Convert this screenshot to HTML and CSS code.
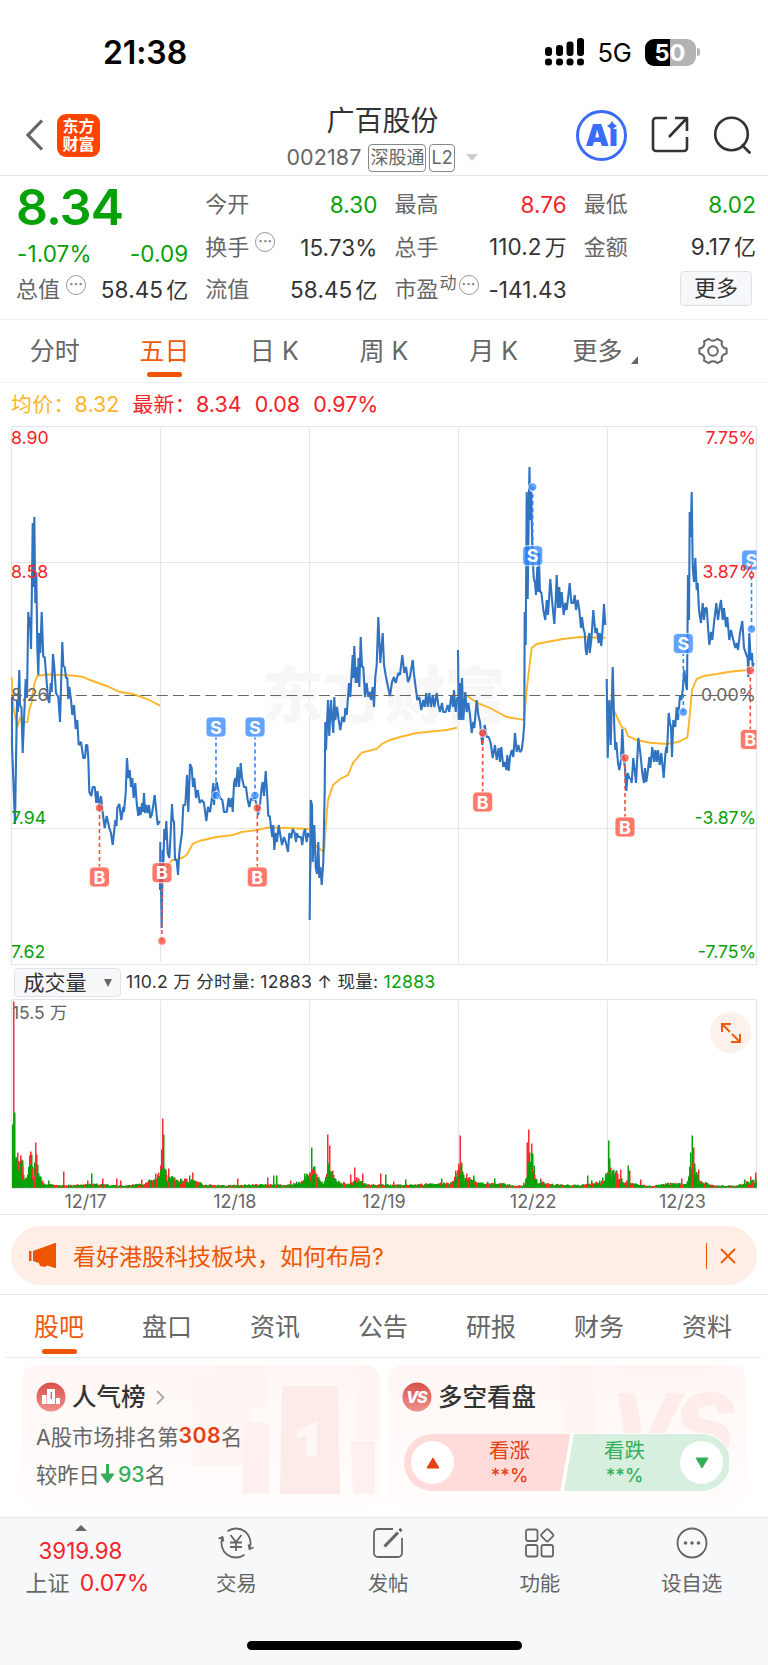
FILE: index.html
```html
<!DOCTYPE html>
<html lang="zh-CN">
<head>
    <meta charset="UTF-8">
    <meta name="viewport" content="width=device-width, initial-scale=1.0">
    <title>广百股份 002187</title>
    <link rel="stylesheet" href="styles.css">
</head>
<body>

    <div class="status">
        <span class="time">21:38</span>
        <div class="status-right">
            <svg class="signal" width="40" height="28" viewBox="0 0 40 28">
                <rect x="0" y="9" width="7" height="9" rx="3"/>
                <rect x="11" y="7" width="7" height="11" rx="3"/>
                <rect x="21.500" y="3.500" width="7" height="14.500" rx="3"/>
                <rect x="32" y="0" width="7" height="18" rx="3"/>
                <rect x="0" y="20.500" width="7" height="7" rx="3"/>
                <rect x="11" y="20.500" width="7" height="7" rx="3"/>
                <rect x="21.500" y="20.500" width="7" height="7" rx="3"/>
                <rect x="32" y="20.500" width="7" height="7" rx="3"/>
            </svg>
            <span class="network">5G</span>
            <span class="battery">50</span>
            <span class="battery-tip"></span>
        </div>
    </div>

    <header>
        <div class="header-left">
            <svg width="20" height="32" viewBox="0 0 20 32" fill="none" stroke="#666" stroke-width="3.200"><path d="M17 1.500 3 16l14 14.500"/></svg>
            <div class="logo"><span>东方</span><span>财富</span></div>
        </div>
        <div class="header-title">
            <h1>广百股份</h1>
            <div class="code">
                <span class="code-number">002187</span>
                <span class="tag">深股通</span>
                <span class="tag">L2</span>
                <i class="caret"></i>
            </div>
        </div>
        <div class="header-right">
            <div class="ai">A<span>ı</span>
                <svg class="spark" width="10" height="10" viewBox="0 0 10 10"><path d="M5 0 7 3 10 5 7 7 5 10 3 7 0 5 3 3z" fill="#3a6cf8"/></svg>
            </div>
            <svg width="38" height="38" viewBox="0 0 38 38" fill="none" stroke="#333" stroke-width="2.600" stroke-linejoin="round"><path d="M16 2H5a3 3 0 0 0-3 3v27a3 3 0 0 0 3 3h28a3 3 0 0 0 3-3V21M18 21 36 2M24 2h12v13"/></svg>
            <svg width="40" height="38" viewBox="0 0 40 38" fill="none" stroke="#333" stroke-width="2.600" stroke-linecap="round"><circle cx="18.500" cy="18" r="16.300"/><path d="m29.500 29.500 7 7"/></svg>
        </div>
    </header>

    <section class="quote">
        <div class="quote-main down">
            <b>8.34</b>
            <div class="row"><span>-1.07%</span><span>-0.09</span></div>
        </div>
        <div class="row"><label>今开</label><span class="down">8.30</span></div>
        <div class="row"><label>最高</label><span class="up">8.76</span></div>
        <div class="row"><label>最低</label><span class="down">8.02</span></div>
        <div class="row"><label>换手<i class="more-dot">···</i></label><span>15.73%</span></div>
        <div class="row"><label>总手</label><span>110.2<em>万</em></span></div>
        <div class="row"><label>金额</label><span>9.17<em>亿</em></span></div>
        <div class="row"><label>总值<i class="more-dot">···</i></label><span>58.45<em>亿</em></span></div>
        <div class="row"><label>流值</label><span>58.45<em>亿</em></span></div>
        <div class="row"><label>市盈<sup>动</sup><i class="more-dot tight">···</i></label><span>-141.43</span></div>
        <div class="row end"><button class="more">更多</button></div>
    </section>

    <nav class="periods">
        <a>分时</a>
        <a class="active">五日</a>
        <a>日 K</a>
        <a>周 K</a>
        <a>月 K</a>
        <a class="period-more">更多<i></i></a>
        <a class="settings">
            <svg width="30" height="28" viewBox="0 0 30 28" fill="none" stroke="#666" stroke-width="2"><path d="M10.700 1.800c1.800 2.600 6.800 2.600 8.600 0l4.700 2.600c-1.400 3.400.8 6.700 4.600 7.200v4.800c-3.800.5-6 3.800-4.600 7.200l-4.700 2.600c-1.800-2.600-6.800-2.600-8.600 0L6 23.600c1.400-3.400-.8-6.700-4.600-7.200v-4.800C5.200 11.100 7.400 7.800 6 4.400z" stroke-linejoin="round"/><circle cx="15" cy="14" r="4.800"/></svg>
        </a>
    </nav>

    <div class="legend">
        <span class="avg"><em>均价：</em>8.32</span>
        <span class="up"><em>最新：</em>8.34</span>
        <span class="up">0.08</span>
        <span class="up">0.97%</span>
    </div>

    <svg class="price-chart" width="768" height="540" viewBox="0 426 768 540">
        <defs>
            <clipPath id="plot"><rect x="11" y="426" width="745.500" height="540"/></clipPath>
        </defs>
        <g class="grid">
            <path d="M11.500 426.500H756.500M11.500 562.500H756.500M11.500 828.500H756.500M11.500 964.500H756.500M11.500 426V965M756.500 426V965M160.500 428V962M309.500 428V962M458.500 428V962M607.500 428V962"/>
        </g>
        <text class="watermark" x="262" y="718">东方财富</text>
        <g id="average" class="average"></g>
        <g id="price" class="price"></g>
        <path class="zero" d="M11 695.500H756"/>
        <g id="markers" clip-path="url(#plot)"></g>
        <g class="axis">
            <text class="up" x="11" y="444.200">8.90</text>
            <text class="up" x="11" y="578">8.58</text>
            <text x="11" y="701">8.26</text>
            <text class="down" x="11" y="823.500">7.94</text>
            <text class="down" x="11" y="957.500">7.62</text>
        </g>
        <g class="axis right">
            <text class="up" x="756" y="444.200">7.75%</text>
            <text class="up" x="756" y="578">3.87%</text>
            <text x="756" y="701">0.00%</text>
            <text class="down" x="756" y="823.500">-3.87%</text>
            <text class="down" x="756" y="957.500">-7.75%</text>
        </g>
    </svg>

    <div class="volume-head">
        <button>成交量<i></i></button>
        <span>110.2 万 分时量: 12883 ↑ 现量: <b>12883</b></span>
    </div>

    <div class="volume">
        <svg width="768" height="190" viewBox="0 999 768 190">
            <g class="grid">
                <path d="M11.500 999.500H756.500V1188.500H11.500zM160.500 1001V1187M309.500 1001V1187M458.500 1001V1187M607.500 1001V1187"/>
            </g>
            <g id="volume"></g>
            <text class="volume-max" x="12" y="1019">15.5 万</text>
        </svg>
        <div class="expand">
            <svg width="22" height="22" viewBox="0 0 22 22" fill="none" stroke="#f05a0c" stroke-width="2"><path d="M2 10V2h9M2 2l8 8M20 12v8h-9M20 20l-8-8"/></svg>
        </div>
    </div>

    <div class="dates">
        <span>12/17</span><span>12/18</span><span>12/19</span><span>12/22</span><span>12/23</span>
    </div>

    <div class="banner-wrap">
        <div class="banner">
            <svg width="28" height="26" viewBox="0 0 28 26" fill="#ee5500"><path d="M0 8h2.500v10H0zM4 8 26 0h1v25h-1l-8-2.500-2 1.500-5-1-1-3-6-2z"/></svg>
            <span>看好港股科技板块，如何布局?</span>
            <i></i>
            <svg width="16" height="16" viewBox="0 0 16 16" fill="none" stroke="#ee5500" stroke-width="1.800"><path d="m1 1 14 14M15 1 1 15"/></svg>
        </div>
    </div>

    <nav class="sections">
        <a class="active">股吧</a>
        <a>盘口</a>
        <a>资讯</a>
        <a>公告</a>
        <a>研报</a>
        <a>财务</a>
        <a>资料</a>
    </nav>

    <div class="cards">
        <div class="card rank">
            <svg class="card-bg" width="190" height="143" viewBox="0 0 190 143">
                <path fill="#fff5f3" d="M3 6h22V0h54l-3 43H60v58H3zM165 0h25v75h-25z"/>
                <path fill="#fef0ee" d="M55 58h24v71H52zM161 76h24v53h-22z"/>
                <path fill="#fdebe9" d="M92 21h56l2 108H90z"/>
                <path fill="#fff7f6" d="M107 65l20-9v35h-11V71l-9 3z"/>
            </svg>
            <div class="card-title">
                <svg width="30" height="30" viewBox="0 0 30 30">
                    <circle cx="15" cy="15" r="14.500" fill="url(#badge)"/>
                    <defs><linearGradient id="badge" x2="0" y2="1"><stop stop-color="#d9504c"/><stop offset="1" stop-color="#ef928c"/></linearGradient></defs>
                    <path fill="#fff" d="M6 13h4.500v9H6zM11 7h8v15h-8zM20 16h4v6h-4z"/>
                    <path stroke="#df6560" stroke-width="1.500" d="M15.300 10v7"/>
                </svg>
                <h2>人气榜</h2>
                <svg width="9" height="15" viewBox="0 0 9 15" fill="none" stroke="#aaa" stroke-width="1.800"><path d="m1 1 6.500 6.500L1 14"/></svg>
            </div>
            <p>A股市场排名第<b>308</b>名</p>
            <p>较昨日<svg class="fall" width="15" height="20" viewBox="0 0 15 20"><path d="M7.500 1v11" stroke="#34ae5c" stroke-width="3" stroke-linecap="round"/><path d="M1 10h13l-6.500 9z" fill="#34ae5c" stroke="#34ae5c" stroke-linejoin="round"/></svg><em>93</em>名</p>
        </div>
        <div class="card versus">
            <svg class="card-bg" width="190" height="143" viewBox="0 0 190 143">
                <path fill="#fff5f3" d="M0 0h35l7 70H10zM60 0h105l-30 15H68z"/>
                <text x="52" y="96" class="card-vs">VS</text>
            </svg>
            <div class="card-title">
                <svg width="30" height="30" viewBox="0 0 30 30">
                    <circle cx="15" cy="15" r="14.500" fill="url(#badge)"/>
                    <text x="14" y="21" class="icon-vs">VS</text>
                </svg>
                <h2>多空看盘</h2>
            </div>
            <div class="vote">
                <div class="vote-up">
                    <i><svg width="14" height="12" viewBox="0 0 14 12"><path d="M7 1 13 11H1z" fill="#e5400f" stroke="#e5400f" stroke-linejoin="round"/></svg></i>
                    <span>看涨<b>**%</b></span>
                </div>
                <div class="vote-down">
                    <span>看跌<b>**%</b></span>
                    <i><svg width="14" height="12" viewBox="0 0 14 12"><path d="M7 11 13 1H1z" fill="#34ae5c" stroke="#34ae5c" stroke-linejoin="round"/></svg></i>
                </div>
            </div>
        </div>
    </div>

    <footer>
        <div class="index">
            <i></i>
            <span class="up">3919.98</span>
            <div>上证 <span class="up">0.07%</span></div>
        </div>
        <a>
            <svg width="36" height="32" viewBox="0 0 36 32" fill="none" stroke="#666" stroke-width="1.800"><path d="M9.500 4.300A14.500 14.500 0 0 1 31.500 21.500M26.500 27.700A14.500 14.500 0 0 1 4.500 10.500M.5 11.500l4-1.500 1 4.500M35.500 20.500l-4 1.500-1-4.500M12.500 8l5.500 7 5.500-7M12 15.500h12M12 20h12M18 15v9"/></svg>
            交易
        </a>
        <a>
            <svg width="32" height="32" viewBox="0 0 32 32" fill="none" stroke="#666" stroke-width="1.800"><path d="M21 2H6a4 4 0 0 0-4 4v20a4 4 0 0 0 4 4h20a4 4 0 0 0 4-4V11"/><path stroke-width="3.200" d="M12.500 19.500 26 5.500M27.500 4l2-2"/></svg>
            发帖
        </a>
        <a>
            <svg width="32" height="32" viewBox="0 0 32 32" fill="none" stroke="#666" stroke-width="1.800"><rect x="2" y="2.500" width="11.500" height="11.500" rx="2"/><rect x="2" y="18" width="11.500" height="11.500" rx="2"/><rect x="17.500" y="18" width="11.500" height="11.500" rx="2"/><rect x="18.500" y="3.500" width="9.500" height="9.500" rx="1.500" transform="rotate(45 23.250 8.250)"/></svg>
            功能
        </a>
        <a>
            <svg width="32" height="32" viewBox="0 0 32 32" fill="none" stroke="#666" stroke-width="1.800"><circle cx="16" cy="16" r="14.500"/><g fill="#666" stroke="none"><circle cx="9.500" cy="16" r="1.800"/><circle cx="16" cy="16" r="1.800"/><circle cx="22.500" cy="16" r="1.800"/></g></svg>
            设自选
        </a>
        <div class="home"></div>
    </footer>

    <script src="chart.js"></script>
</body>
</html>
```
FILE: styles.css
```css
* {
    margin: 0;
    padding: 0;
    box-sizing: border-box;
}

body {
    width: 768px;
    height: 1665px;
    background-color: #fff;
    color: #333;
    font-family: Inter, "Noto Sans CJK SC", sans-serif;
    font-size: 22px;
    overflow: hidden;
}

i, em {
    font-style: normal;
}

svg {
    display: block;
    flex-shrink: 0;
}

button {
    font: inherit;
    color: #333;
    background-color: #f7f8fa;
    border: 1.5px solid #dfe2e8;
    border-radius: 4px;
}

.up {
    color: #f6222a;
    fill: #f6222a;
}

.down {
    color: #06a106;
    fill: #06a106;
}

/* status bar */
.status {
    height: 95px;
    padding: 9px 68px 0 103px;
    display: flex;
    align-items: center;
    justify-content: space-between;
    color: #000;
}

.time {
    font-size: 32px;
    font-weight: 600;
    letter-spacing: -0.1px;
}

.status-right {
    display: flex;
    align-items: center;
}

.network {
    margin: 0 13px 0 13px;
    font-size: 25.5px;
    letter-spacing: -0.3px;
}

.battery {
    width: 51px;
    height: 27px;
    border-radius: 9px;
    background: linear-gradient(90deg, #000 50%, #b3b3b3 50%);
    color: #fff;
    font-size: 23.5px;
    font-weight: 700;
    line-height: 27px;
    text-align: center;
}

.battery-tip {
    width: 3px;
    height: 8px;
    margin-left: 1.5px;
    border-radius: 0 3px 3px 0;
    background-color: #b3b3b3;
}

/* header */
header {
    height: 81px;
    padding: 0 15px 0 25px;
    display: grid;
    grid-template-columns: 240px 1fr 240px;
    border-bottom: 1.5px solid #e6e6e6;
}

.header-left {
    display: flex;
    align-items: center;
    gap: 12px;
}

.logo {
    width: 43px;
    height: 43px;
    border-radius: 9px;
    background-color: #ff4400;
    color: #fff;
    font-size: 16px;
    font-weight: 700;
    line-height: 18px;
    display: flex;
    flex-direction: column;
    align-items: center;
    justify-content: center;
}

.header-title {
    display: flex;
    flex-direction: column;
    align-items: center;
}

h1 {
    height: 48px;
    font-size: 28px;
    font-weight: 400;
    line-height: 52px;
    margin-right: 13px;
}

.code {
    display: flex;
    align-items: center;
    margin-right: 14px;
    color: #666;
    font-size: 21.5px;
    line-height: 29px;
}

.code-number {
    margin-right: 7px;
    letter-spacing: 0.1px;
}

.tag {
    height: 28px;
    margin-right: 3px;
    padding: 0 1px;
    border: 1.3px solid #888;
    border-radius: 4px;
    font-size: 18px;
    line-height: 25px;
}

.caret {
    margin-left: 8px;
    border: 6.5px solid transparent;
    border-top: 7px solid #ccc;
    border-bottom: 0;
}

.header-right {
    display: flex;
    align-items: center;
    justify-content: flex-end;
    gap: 24px;
}

.ai {
    position: relative;
    width: 51px;
    height: 51px;
    border: 3px solid #3a6cf8;
    border-radius: 50%;
    color: #3a6cf8;
    font-size: 30px;
    font-weight: 900;
    line-height: 45px;
    text-align: center;
}

.spark {
    position: absolute;
    top: 8px;
    right: 7px;
}

/* quote */
.quote {
    height: 144px;
    padding: 7px 12px 0 17px;
    display: grid;
    grid-template-columns: repeat(4, 171.25px);
    grid-auto-rows: 42.7px;
    column-gap: 18px;
    border-bottom: 1.5px solid #eee;
}

.quote-main {
    grid-row: span 2;
}

.quote-main b {
    display: block;
    height: 49px;
    margin-left: -1px;
    font-size: 50px;
    font-weight: 600;
    line-height: 49px;
    letter-spacing: -0.9px;
}

.row {
    height: 43px;
    display: flex;
    align-items: center;
    justify-content: space-between;
    white-space: nowrap;
    line-height: 43px;
}

.row > span {
    font-size: 22.5px;
    letter-spacing: 0.1px;
}

.quote-main .row {
    height: 43px;
}

.end {
    grid-column: 4;
    justify-content: flex-end;
}

.row label {
    color: #666;
    display: flex;
    align-items: center;
    margin-left: -1px;
}

.row em {
    margin-left: 3px;
    font-size: 22px;
}

.more-dot {
    width: 20px;
    height: 20px;
    margin: -10px 0 0 6px;
    border: 1.5px solid #999;
    border-radius: 50%;
    color: #888;
    font-size: 14px;
    font-weight: 700;
    line-height: 16px;
    text-align: center;
}

.more-dot.tight {
    margin-left: 2px;
}

sup {
    margin: -14px 0 0 1px;
    font-size: 17px;
    line-height: 20px;
}

.more {
    width: 72px;
    height: 35px;
    margin: -2px 4px 0 0;
    line-height: 29px;
}

/* tabs */
.periods, .sections {
    display: grid;
    grid-template-columns: repeat(7, 1fr);
    color: #666;
    font-size: 25px;
}

.periods {
    height: 63px;
    border-bottom: 1.5px solid #f0f0f0;
}

.periods a, .sections a {
    height: 61px;
    padding-bottom: 4px;
    display: flex;
    align-items: center;
    justify-content: center;
    position: relative;
}

.periods .settings {
    padding-bottom: 0;
}

.active {
    color: #f05a0c;
}

.active::after {
    content: "";
    position: absolute;
    left: calc(50% - 17.5px);
    bottom: 4px;
    width: 35px;
    height: 5.5px;
    border-radius: 3px;
    background-color: #ee5500;
}

.period-more {
    padding-left: 4px;
}

.period-more i {
    margin: 22px 0 0 9px;
    border-left: 7px solid transparent;
    border-bottom: 8px solid #666;
}

.legend {
    height: 43px;
    padding-left: 11px;
    display: flex;
    align-items: center;
    gap: 13px;
    font-size: 21.5px;
    line-height: 43px;
}

.legend em {
    font-size: 20.8px;
    letter-spacing: 0.4px;
}

.avg {
    color: #fdb52b;
}

/* charts */
.grid path {
    fill: none;
    stroke: #e2e5ed;
    stroke-width: 1.2;
}

.watermark {
    font-size: 61px;
    font-weight: 900;
    fill: #f7f7f7;
}

.price polyline {
    fill: none;
    stroke: #2f73c1;
    stroke-width: 2.1;
    stroke-linejoin: bevel;
}

.average polyline {
    fill: none;
    stroke: #fdb52b;
    stroke-width: 1.9;
}

.zero {
    stroke: #666;
    stroke-width: 1.2;
    stroke-dasharray: 11 5.2;
}

.axis text {
    font-size: 17.7px;
}

.axis text:not([class]) {
    fill: #666;
}

.right {
    text-anchor: end;
}

.marker line {
    stroke-width: 1.6;
    stroke-dasharray: 4 3;
}

.marker text {
    fill: #fff;
    font-size: 18px;
    font-weight: 700;
    text-anchor: middle;
}

.marker.sell {
    fill: #2f86ff;
    stroke: #2f86ff;
}

.marker.buy {
    fill: #ff4d3d;
    stroke: #ff4d3d;
}

.marker rect, .marker circle {
    stroke: #fff;
    stroke-width: 0.8;
    fill-opacity: 0.76;
}

.marker text {
    stroke: none;
}

.volume-head {
    height: 33px;
    padding-left: 14px;
    display: flex;
    align-items: center;
    font-size: 17.6px;
    letter-spacing: 0.25px;
    line-height: 30px;
}

.volume-head > span {
    margin-top: -2px;
}

.volume-head button {
    width: 107px;
    height: 29px;
    margin: 0 5px 0 0;
    display: flex;
    align-items: center;
    justify-content: center;
    gap: 17px;
    font-size: 21px;
    line-height: 24px;
}

.volume-head i {
    border: 4.5px solid transparent;
    border-top: 8px solid #666;
    border-bottom: 0;
}

.volume-head b {
    font-weight: 400;
    color: #06a106;
}

.volume {
    position: relative;
    height: 190px;
}

.volume-max {
    font-size: 17.5px;
    fill: #666;
}

.expand {
    position: absolute;
    top: 13px;
    right: 17px;
    width: 41px;
    height: 41px;
    border-radius: 50%;
    background-color: #fdf1eb;
    display: flex;
    align-items: center;
    justify-content: center;
}

.dates {
    height: 26px;
    padding: 0 11px;
    display: grid;
    grid-template-columns: repeat(5, 1fr);
    color: #666;
    font-size: 18px;
    line-height: 26px;
    text-align: center;
    border-bottom: 1.5px solid #e6e8ec;
}

/* banner */
.banner-wrap {
    height: 80px;
    padding: 11px 11px 0;
    border-bottom: 1.5px solid #e6e8ec;
}

.banner {
    height: 59px;
    padding: 0 21px 0 18px;
    border-radius: 30px;
    background-color: #feeee6;
    color: #ee5500;
    font-size: 23px;
    display: flex;
    align-items: center;
}

.banner span {
    margin: -2px 0 0 16px;
    flex: 1;
}

.banner i {
    width: 1.5px;
    height: 26px;
    margin-right: 13px;
    background-color: #ee5500;
}

.sections {
    height: 63px;
    margin: 0 7px 0 5px;
    border-bottom: 1.5px solid #ebebeb;
}

.sections a {
    height: 63px;
}

/* cards */
.cards {
    height: 159px;
    padding: 7px 22px 0;
    display: grid;
    grid-template-columns: 1fr 1fr;
    gap: 8px;
}

.card {
    position: relative;
    height: 143px;
    padding: 13px 14px 0;
    border-radius: 14px;
    background: linear-gradient(#fff7f5, #fffdfc);
    overflow: hidden;
}

.card-bg {
    position: absolute;
    top: 0;
    right: 0;
}

.card-vs {
    font-size: 94px;
    font-weight: 800;
    font-style: italic;
    letter-spacing: -8px;
    fill: #fdecea;
}

.icon-vs {
    font-size: 16px;
    font-weight: 800;
    font-style: italic;
    letter-spacing: -1.5px;
    text-anchor: middle;
    fill: #fff;
}

.card-title {
    position: relative;
    height: 38px;
    display: flex;
    align-items: center;
    gap: 6px;
}

h2 {
    font-size: 24.5px;
    font-weight: 500;
    line-height: 38px;
    margin-right: 4px;
}

.card p {
    position: relative;
    display: flex;
    align-items: center;
    height: 38.5px;
    color: #666;
    font-size: 21.3px;
}

.card p b {
    color: #e5400f;
    font-weight: 600;
    letter-spacing: 0.4px;
}

.card p em {
    color: #34ae5c;
    font-weight: 500;
    margin-left: 3px;
}

.vote {
    position: relative;
    width: 328px;
    height: 59px;
    margin: 17px 0 0 1px;
    display: flex;
    border: 1.5px solid #fff;
    border-radius: 30px;
    background-color: #fff;
    overflow: hidden;
}

.vote > div {
    display: flex;
    align-items: center;
    justify-content: space-between;
}

.vote-up {
    width: 168px;
    padding: 0 42px 0 7px;
    background-color: #ffdcd9;
    color: #e5400f;
    clip-path: polygon(0 0, 99% 0, 93% 100%, 0 100%);
}

.vote-down {
    width: 165px;
    margin-left: -8px;
    padding: 0 6px 0 40px;
    background-color: #d7efde;
    color: #34ae5c;
    clip-path: polygon(6% 0, 100% 0, 100% 100%, 0 100%);
}

.vote i {
    width: 43px;
    height: 43px;
    border-radius: 50%;
    background-color: #fff;
    display: flex;
    align-items: center;
    justify-content: center;
}

.vote span {
    font-size: 20.5px;
    line-height: 25px;
    text-align: center;
}

.vote b {
    display: block;
    font-size: 18.5px;
    font-weight: 500;
    line-height: 25px;
}

/* bottom bar */
footer {
    height: 149px;
    display: grid;
    grid-template-columns: 161px repeat(4, 1fr);
    grid-template-rows: 122px 1fr;
    background-color: #f7f8fa;
    border-top: 1.5px solid #e4e6ea;
    color: #666;
}

footer a {
    padding: 9px 1px 0 0;
    display: flex;
    flex-direction: column;
    align-items: center;
    gap: 10px;
    font-size: 20.5px;
    line-height: 29px;
}

.index {
    padding-top: 7px;
    display: flex;
    flex-direction: column;
    align-items: center;
    line-height: 32px;
}

.index i {
    margin-bottom: 4px;
    border: 6px solid transparent;
    border-bottom: 6px solid #666;
    border-top: 0;
}

.index > span {
    font-size: 22.3px;
}

.index div {
    margin-left: 14px;
    white-space: nowrap;
    word-spacing: 4px;
}

.index div span {
    font-size: 23px;
}

.home {
    grid-column: 1 / -1;
    width: 275px;
    height: 9px;
    margin: 1px auto 0;
    border-radius: 5px;
    background-color: #000;
}
```
FILE: chart.js
```js
const NS = 'http://www.w3.org/2000/svg';

// one line per trading day
const price = [
    '12,697 12,745 15,824 17,700 18,712 19.3,670 20,705 21.5,708 22.7,753 24,720 25.7,679 27,698 28.3,612 29.3,628 30,617 31,649 32,583 32.7,523 33.3,587 34.3,517 35.3,603 36.3,572 37.3,648 38.3,675 39.3,633 40.3,653 41.7,612 43.3,657 44.7,657 46,673 48,699 49.3,703 50.7,683 51.7,692 53,654 54.3,667 56,693 58.3,697 60,722 62.3,642 63.3,666 64.7,667 66,678 67.3,678 68.3,699 69.3,687 71,700 72.3,715 74,705 75.7,729 77.3,720 78.7,745 81,742 83.3,758 85,758 86,745 87.3,745 88.3,758 89.3,792 91.3,796 92.7,787 94.7,787 96.3,803 97.5,791 99.3,808 101,796 102.7,813 104.7,828 106.7,816 109.3,828 111,833 112.7,845 114,833 115.3,820 116.5,826 117.3,808 119.3,804 121.3,820 123.3,807 124,812 125.7,793 127,758 128.3,778 129.7,770 131,787 132.3,778 133.7,798 135.3,783 136.7,803 138.3,816 139.3,807 140.7,815 142,803 143,812 144,793 145,813 146.3,805 147.7,813 149,805 150.3,818 151.7,815 153.3,805 154.7,795 156,808 157.7,825 159.7,821',
    '160.3,842 160,890 160.7,863 161.7,928 162.7,850 163.3,867 164.3,829 165.3,840 166.3,821 167.7,853 169.3,858 170.7,833 172,804 173,821 174,821 175,860 176.7,860 178,875 179.3,853 180.7,842 182,833 183.3,805 185.3,805 187,775 188.3,812 190,764 191.7,768 193,787 194.3,778 196,798 197.7,790 199.7,803 201.7,800 204,803 206.3,821 208,807 210,812 211.7,800 213.3,783 214,805 215,792 216.7,782 218.3,790 220,798 222.3,800 224,812 226.7,812 228.7,798 230,807 231.7,798 232.7,812 234,783 235.3,778 236,787 237.7,767 239,787 240.7,763 242,778 244,787 246,787 247.7,800 249.3,807 251,798 252.7,800 254.7,798 256.7,805 258,815 260,805 261.7,787 262.7,782 264,796 265.7,771 267.3,797 268.3,816 269.7,816 271,827 272.3,837 273.3,825 274.3,850 275.7,833 277,842 278.7,825 280,833 282,845 284,837 286,843 288,852 289.3,833 291.3,838 292.7,829 294.7,833 296,842 297,833 298.3,837 301,837 302.3,845 303.7,833 305,829 306.7,842 308,833 309.3,837',
    '309.7,920 310.7,800 312,805 312.7,862 314.3,825 315.7,867 317,874 318.3,842 319.3,878 320.3,867 321.7,885 323.3,862 324.7,790 325.3,722 326,750 328,700 329.3,736 331,700 332,717 333.3,733 334.3,697 335.3,720 337,707 338.7,720 340.3,730 342.3,717 344.3,722 345.3,708 346.7,715 348,697 349,683 350.3,697 352.7,655 353.3,678 354.3,646 355.7,683 356.7,667 358,683 358.5,658 359.3,687 360.7,637 362,667 363.3,667 365,697 366.7,683 368.3,697 370,692 371,700 372.7,687 374,707 375.3,677 376.7,665 378.3,617 380.3,663 382.7,633 384,665 386,677 388,687 390,696 392,682 394,677 395.7,683 398.3,673 400,675 402.3,655 404.3,673 406,667 408,682 410,677 412.7,660 414.3,677 416,690 417.3,700 419.3,697 421.3,710 423.3,700 424.7,707 426.3,693 427.7,707 429.3,693 431,707 432.7,695 434.3,707 436.7,693 438.3,705 440,712 442,703 443.3,712 445.7,712 447.7,705 449.3,712 451.3,695 453,707 454,690 455.7,712 457.3,697',
    '458,650 458.7,720 460,683 461,720 462,678 463.3,720 465.3,692 466.7,712 468.3,703 470,715 471.7,733 473.3,722 474.3,728 476.7,700 478.3,715 480,722 482.3,745 484.7,725 486.7,737 488.7,737 490.7,743 492.7,758 495,745 496.7,760 498.7,748 500,762 501.3,747 503.3,767 505,762 506.3,770 507.3,755 508.7,771 510,757 511.7,750 513.3,757 515,733 516.7,752 518.3,745 520,752 521.7,750 523.3,737 524.3,723 524.7,612 525.7,645 526.7,492 527.7,599 529,492 529.5,467 530.3,520 531.3,492 532.3,550 533.7,578 535,583 536,595 537.3,567 538.3,592 538.7,553 540,592 541.3,592 543.3,610 545.3,620 546.7,600 548,615 550.3,579 552,600 554.3,624 555.7,600 556.7,575 558,608 559.3,587 560.3,608 561.7,592 563.7,615 565.3,603 566.7,610 569.7,583 571.3,603 573.3,603 574.7,595 576,610 577.7,600 579.3,610 581,628 582,617 583.3,628 584.7,633 585.7,650 586.7,655 588,640 589.3,633 589.7,653 591.3,640 593.3,610 595.3,633 596.7,628 598.7,643 599.7,633 601.3,646 602.7,628 604,604 605.3,625',
    '606.7,679 607.7,758 609.3,700 610.7,745 612.7,667 614.3,727 615.3,750 616.3,742 618,763 619.3,770 621,760 622.3,729 623.7,758 625,768 626.3,791 627.7,773 629.3,778 630.7,779 631.7,783 633.3,758 634.7,770 636,783 638.3,738 640.3,753 642.3,773 644,783 645,768 646.3,782 648,770 649.3,757 650.3,768 652.3,747 654,762 655.3,750 656.7,762 658,750 659.7,765 661.3,753 663.7,778 665.3,755 666.3,747 667,753 668.7,713 670,723 671,727 672,757 673.3,720 675.3,727 676.7,707 678,720 680,695 681.3,700 682.7,690 684.3,670 686,685 687,690 688,575 689,620 689.7,512 690.7,537 691.7,492 692.7,567 694,582 695.3,558 696.7,590 697.7,583 699,610 701,623 702.7,603 704,620 705.3,608 706.7,608 708,627 709.3,645 711,632 712.3,640 714,623 716.3,603 718,620 719.3,610 721,600 722.7,620 724,608 726,627 727.3,617 729.3,640 731,630 733.3,640 735.3,648 736.7,643 738,650 740,633 742.3,621 744,648 745.7,653 747.7,658 748.3,677 749.3,633 750.7,660 752,653 752.7,667 753.7,663'
];

const average = [
    '11.7,677 12.3,692 13.3,707 15,715 17.3,727 20,718 23,722 27.3,722 29.3,710 31.7,702 33.3,690 34.5,683 37.3,676 46,674.5 73,675.5 83,677 90,680 106.7,686 120,692 133,694 147,699 160,705.7',
    '161,898 163,872 165,870 172,860 181.7,858 186.7,855 192.7,844 200,840.7 216.7,837 233,835 241.7,832 256.7,830 268,827.5 287,828 309,829',
    '310,874 311.7,857 315,845 320,849 324,852 326,823 328,800 333,785 340,779 348,775 353,763 361.7,752.7 376.7,749 381.7,744 390,740 400,737 416.7,733 446.7,730 457,727.7',
    '458,700 463,692.7 473,700 476.7,702.7 490,708 506.7,717 524,720 526.7,690 529,670 531.7,648 536.7,644 546.7,642 563,639 580,637 605.7,637.7',
    '607,725 610,703 615,713 621.7,727 625.3,729 628,736 636.7,740 650,742.7 666.7,744 678,742 687.3,737.7 689.3,720 692,690 696.7,679 705,675.7 716.7,674 730,671.7 748,670 754,670.5'
];

// type, x, dot y, label y
const markers = [
    ['B', 99.5, 808, 877], ['B', 162, 941, 872.7], ['B', 257.3, 808, 877],
    ['B', 482.7, 733, 802], ['B', 625, 758, 827], ['B', 750.3, 670.5, 739.5],
    ['S', 216, 795.5, 727], ['S', 255, 795.5, 727], ['S', 532.7, 487, 555.7],
    ['S', 683.3, 712, 643.5], ['S', 751.5, 629, 560]
];

// x, height, r = rising / g = falling
const spikes = [
    [12, 63, 'g'], [13, 186, 'r'], [14, 75, 'g'], [15, 30, 'r'], [16, 30, 'g'], [17, 35, 'r'], [18, 17, 'r'], [20, 32, 'r'], [21, 28, 'g'], [22, 27, 'g'], [27, 13, 'r'], [29, 32, 'r'], [30, 36, 'r'], [31, 33, 'g'], [32, 21, 'g'], [34, 25, 'g'], [35, 45, 'r'], [36, 33, 'r'], [37, 23, 'g'], [38, 14, 'g'], [40, 10, 'r'], [48, 7, 'g'],
    [63, 16, 'r'], [87, 7, 'r'], [91, 14, 'g'], [102, 9, 'r'], [116, 9, 'r'], [120, 7, 'r'], [141, 8, 'r'], [149, 8, 'r'], [155, 14, 'r'], [160, 22, 'r'], [161, 38, 'g'], [162, 69, 'r'], [163, 53, 'g'], [165, 18, 'r'], [168, 19, 'r'], [171, 11, 'r'], [174, 10, 'g'], [180, 9, 'g'], [184, 9, 'r'], [189, 12, 'g'], [192, 15, 'r'],
    [237, 9, 'r'], [267, 10, 'r'], [273, 12, 'g'], [276, 12, 'g'], [290, 7, 'r'], [304, 14, 'g'], [307, 13, 'r'], [309, 15, 'g'], [311, 40, 'g'], [313, 21, 'r'], [314, 21, 'g'], [327, 53, 'r'], [328, 24, 'g'], [329, 42, 'r'], [332, 17, 'r'], [350, 13, 'r'], [354, 20, 'r'], [356, 10, 'g'], [362, 14, 'r'], [380, 14, 'r'], [385, 13, 'g'],
    [393, 6, 'r'], [405, 8, 'g'], [441, 9, 'g'], [455, 17, 'r'], [458, 24, 'r'], [459.5, 52, 'r'], [461, 25, 'g'], [462, 16, 'g'], [466, 14, 'r'], [473, 12, 'g'], [494, 9, 'g'], [523, 5, 'r'], [526.5, 45, 'r'], [528, 58, 'r'], [529, 35, 'g'], [531, 44, 'r'], [532, 34, 'g'], [533.5, 22, 'g'], [540, 9, 'r'],
    [587, 12, 'g'], [591, 7, 'g'], [602, 10, 'g'], [605, 14, 'r'], [607, 14, 'r'], [608, 47, 'g'], [609, 29, 'g'], [610, 20, 'r'], [612, 17, 'g'], [616, 17, 'g'], [620, 18, 'r'], [627.5, 22, 'g'], [629, 17, 'r'], [640, 8, 'r'], [681, 9, 'r'], [689, 21, 'r'], [690, 35, 'g'], [691.5, 52, 'g'], [693, 40, 'r'], [694, 24, 'g'], [698, 18, 'r'], [744, 8, 'g'], [750, 11, 'r'], [755, 15, 'r']
];

// upper bound of the ordinary minutes
const floor = [
    [12, 30], [22, 24], [24, 8], [29, 24], [38, 14], [45, 4], [60, 2.5], [95, 4], [125, 2], [145, 6], [156, 10], [162, 30], [168, 12], [180, 8], [192, 10], [202, 4], [220, 2.5], [270, 4], [290, 3], [302, 9], [312, 20], [322, 5], [329, 22], [337, 7], [350, 4], [356, 10], [366, 4], [400, 3], [420, 4], [450, 5], [459, 22], [467, 12], [478, 6], [500, 5], [515, 2], [524, 3], [529, 36], [536, 8], [550, 4], [570, 3], [590, 4], [603, 8], [610, 22], [622, 8], [633, 5], [650, 2], [670, 5], [686, 4], [692, 32], [698, 9], [710, 3], [735, 2], [748, 7], [756, 10]
];

function add(parent, name, attrs, text) {
    const el = document.createElementNS(NS, name);
    for (const key in attrs) el.setAttribute(key, attrs[key]);
    if (text) el.textContent = text;
    parent.append(el);
    return el;
}

price.forEach(points => add(document.getElementById('price'), 'polyline', { points }));
average.forEach(points => add(document.getElementById('average'), 'polyline', { points }));

markers.forEach(([type, x, dot, label]) => {
    const g = add(document.getElementById('markers'), 'g', { class: 'marker ' + (type === 'S' ? 'sell' : 'buy') });
    const edge = label > dot ? label - 10 : label + 10;

    add(g, 'line', { x1: x, x2: x, y1: dot, y2: edge });
    add(g, 'circle', { cx: x, cy: dot, r: 4.2 });
    add(g, 'rect', { x: x - 10, y: label - 10, width: 20, height: 20, rx: 4 });
    add(g, 'text', { x: x, y: label + 6.5 }, type);
});

const volume = document.getElementById('volume');
const base = 1187.5;

function bar(x, h, type) {
    add(volume, 'rect', { x, y: base - h, width: 1.5, height: h, fill: type === 'r' ? '#fb2b30' : '#06a106' });
}

function level(x) {
    const i = floor.findIndex(p => p[0] > x);
    const [x0, h0] = floor[i - 1];
    const [x1, h1] = floor[i];
    return h0 + (h1 - h0) * (x - x0) / (x1 - x0);
}

let seed = 7;
function random() {
    seed = (seed * 16807) % 2147483647;
    return seed / 2147483647;
}

spikes.forEach(([x, h, type]) => bar(x, h, type));

for (let x = 12; x < 756; x++) {
    const h = level(x);
    bar(x, Math.max(1, h * (0.45 + random() * 0.6)), random() > 0.55 ? 'r' : 'g');
    bar(x, Math.max(1, h * (0.3 + random() * 0.55)), random() > 0.2 ? 'g' : 'r');
}
```
